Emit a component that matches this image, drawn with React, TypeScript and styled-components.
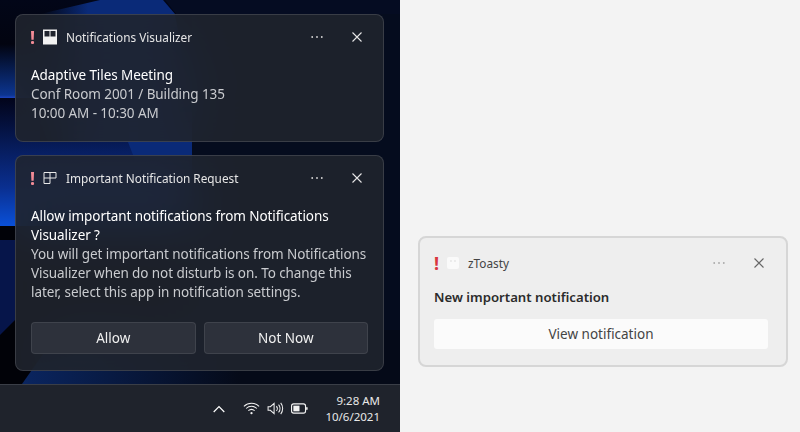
import React from 'react'
import styled, { createGlobalStyle } from 'styled-components'

const GlobalStyle = createGlobalStyle`
  html, body { margin: 0; padding: 0; background: #f3f3f3; }
  body { font-family: "Noto Sans", "Open Sans", Arial, sans-serif; }
`

const Page = styled.div`
  display: grid;
  grid-template-columns: 400px 400px;
  width: 800px;
  height: 432px;
  overflow: hidden;
`

const Desktop = styled.div`
  position: relative;
  display: flex;
  flex-direction: column;
  height: 432px;
  background: #050b1c;
  overflow: hidden;
`

const Wallpaper = styled.svg`
  position: absolute;
  top: 0;
  left: 0;
`

const Stack = styled.div`
  position: relative;
  flex: 1;
  display: flex;
  flex-direction: column;
  gap: 13px;
  padding: 14px 16px 0 15px;
`

const Card = styled.div<{ $height: number }>`
  height: ${p => p.$height}px;
  box-sizing: border-box;
  padding: 0 15px;
  border: 1px solid rgba(255, 255, 255, 0.13);
  border-radius: 8px;
  background: rgba(32, 36, 46, 0.88);
  backdrop-filter: blur(24px);
  color: #fff;
`

const Header = styled.div<{ $indent?: number }>`
  display: flex;
  align-items: center;
  height: 44px;
  padding-left: ${p => p.$indent ?? 0}px;
`

const Alert = styled.span<{ $color: string }>`
  width: 3px;
  margin-right: 9px;
  font-size: 18px;
  font-weight: 700;
  line-height: 16px;
  color: ${p => p.$color};
  display: flex;
  justify-content: center;
`

const AppName = styled.span<{ $color: string }>`
  margin-left: 9px;
  flex: 1;
  font-size: 11.8px;
  color: ${p => p.$color};
`

const HeaderButtons = styled.div<{ $inset: number }>`
  display: flex;
  align-items: center;
  gap: 29px;
  margin-right: ${p => p.$inset}px;
`

const Body = styled.div`
  margin-top: 7px;
  font-size: 13.5px;
  letter-spacing: -0.08px;
  line-height: 19px;
  color: #c9cbcf;
`

const Title = styled.div`
  color: #fff;
`

const Actions = styled.div`
  display: grid;
  grid-template-columns: 1fr 1fr;
  gap: 8px;
  margin-top: 20px;
`

const Action = styled.div`
  height: 32px;
  display: flex;
  align-items: center;
  justify-content: center;
  box-sizing: border-box;
  border: 1px solid rgba(255, 255, 255, 0.09);
  border-radius: 4px;
  background: #2d313b;
  font-size: 13.5px;
  color: #f0f0f0;
`

const Taskbar = styled.div`
  position: relative;
  height: 48px;
  box-sizing: border-box;
  border-top: 1px solid #3a3e47;
  background: #1f232c;
  display: flex;
  align-items: center;
  justify-content: flex-end;
  padding-right: 20px;
  color: #fff;
`

const Tray = styled.div`
  display: flex;
  align-items: center;
  margin-right: 17px;
  gap: 7px;
`

const Chevron = styled.svg`
  margin-right: 11px;
`

const Clock = styled.div`
  text-align: right;
  font-size: 11.5px;
  line-height: 16px;
  color: #e8e8e8;
`

const Light = styled.div`
  display: flex;
  align-items: flex-start;
  padding-left: 18px;
`

const LightCard = styled.div`
  width: 370px;
  height: 131px;
  margin-top: 236px;
  box-sizing: border-box;
  padding: 3px 18px 0 14px;
  border: 2px solid #d6d6d6;
  border-radius: 8px;
  background: #eeeeee;
`

const LightTitle = styled.div`
  margin-top: 3px;
  font-size: 13.2px;
  font-weight: 600;
  color: #2b2b2b;
`

const LightAction = styled.div`
  height: 30px;
  margin-top: 13px;
  display: flex;
  align-items: center;
  justify-content: center;
  border-radius: 3px;
  background: #fbfbfb;
  font-size: 13.5px;
  color: #444;
`

const Dots = ({ color }: { color: string }) => (
  <svg width="12" height="4" viewBox="0 0 12 4" fill={color}>
    <circle cx="1.2" cy="2" r="0.9" />
    <circle cx="6" cy="2" r="0.9" />
    <circle cx="10.8" cy="2" r="0.9" />
  </svg>
)

const Close = ({ color }: { color: string }) => (
  <svg width="10" height="10" viewBox="0 0 10 10" stroke={color} strokeWidth="1.1" fill="none">
    <path d="M0.5 0.5 L9.5 9.5 M9.5 0.5 L0.5 9.5" />
  </svg>
)

function App() {
  return (
    <>
      <GlobalStyle />
      <Page>
        <Desktop>
          <Wallpaper width="400" height="384" viewBox="0 0 400 384">
            <defs>
              <linearGradient id="upper" x1="0" y1="0" x2="0" y2="1">
                <stop offset="0" stopColor="#020618" />
                <stop offset="0.45" stopColor="#020410" />
                <stop offset="0.97" stopColor="#0c3590" />
                <stop offset="1" stopColor="#1d44c0" />
              </linearGradient>
              <linearGradient id="lower" x1="0" y1="0" x2="0" y2="1">
                <stop offset="0" stopColor="#02041a" />
                <stop offset="0.7" stopColor="#0a2f90" />
                <stop offset="1" stopColor="#0a50d8" />
              </linearGradient>
              <linearGradient id="sweep" x1="0" y1="0" x2="1" y2="0">
                <stop offset="0" stopColor="#030612" />
                <stop offset="0.3" stopColor="#0a2a78" />
                <stop offset="1" stopColor="#0a2a78" />
              </linearGradient>
              <linearGradient id="foot" x1="0" y1="0" x2="1" y2="0">
                <stop offset="0" stopColor="#0a2560" />
                <stop offset="1" stopColor="#050a18" />
              </linearGradient>
            </defs>
            <rect x="0" y="0" width="400" height="98" fill="url(#upper)" />
            <rect x="0" y="98" width="400" height="128" fill="url(#lower)" />
            <rect x="0" y="226" width="400" height="158" fill="#010208" />
            <polygon points="0,240 15,240 15,320 0,335" fill="#06154a" />
            <polygon points="22,384 60,330 240,330 240,384" fill="url(#foot)" />
            <rect x="240" y="330" width="160" height="54" fill="#050a18" />
            <polygon points="100,0 163,0 175,14 200,155 192,160 135,160 128,142 40,142 40,14" fill="url(#sweep)" />
            <rect x="192" y="0" width="208" height="330" fill="#050c1e" />
            <polygon points="165,0 400,0 400,14 176,14" fill="#050c22" />
          </Wallpaper>
          <Stack>
            <Card $height={128}>
              <Header>
                <Alert $color="#f28b96">!</Alert>
                <svg width="14" height="16" viewBox="0 0 14 16">
                  <rect x="0" y="0.5" width="14" height="15" fill="#f2f2f2" />
                  <path d="M1.5 2 H6.5 V7.5 H1.5 Z M7.5 2 H12.5 V7.5 H7.5 Z" fill="#20242e" />
                </svg>
                <AppName $color="#e6e6e6">Notifications Visualizer</AppName>
                <HeaderButtons $inset={6}>
                  <Dots color="#d8d8d8" />
                  <Close color="#e6e6e6" />
                </HeaderButtons>
              </Header>
              <Body>
                <Title>Adaptive Tiles Meeting</Title>
                Conf Room 2001 / Building 135
                <br />
                10:00 AM - 10:30 AM
              </Body>
            </Card>
            <Card $height={216}>
              <Header>
                <Alert $color="#f28b96">!</Alert>
                <svg width="14" height="14" viewBox="0 0 14 14" fill="none" stroke="#e8e8e8" strokeWidth="1">
                  <path d="M1 1.5 H7 V12.5 H1 Z M1 7 H7 M7 1.5 H13 V7 H7" />
                </svg>
                <AppName $color="#e6e6e6">Important Notification Request</AppName>
                <HeaderButtons $inset={6}>
                  <Dots color="#d8d8d8" />
                  <Close color="#e6e6e6" />
                </HeaderButtons>
              </Header>
              <Body>
                <Title>Allow important notifications from Notifications Visualizer ?</Title>
                You will get important notifications from Notifications Visualizer when do not disturb is on. To change this later, select this app in notification settings.
              </Body>
              <Actions>
                <Action>Allow</Action>
                <Action>Not Now</Action>
              </Actions>
            </Card>
          </Stack>
          <Taskbar>
            <Tray>
              <Chevron width="12" height="8" viewBox="0 0 12 8" fill="none" stroke="#fff" strokeWidth="1.2">
                <path d="M0.7 7 L6 1.5 L11.3 7" />
              </Chevron>
              <svg width="17" height="13" viewBox="0 0 18 14" fill="none" stroke="#f2f2f2" strokeWidth="1.1">
                <path d="M0.8 4.6 C5.5 0.2 12.5 0.2 17.2 4.6 M3.2 7 C6.6 3.8 11.4 3.8 14.8 7 M5.6 9.4 C7.8 7.5 10.2 7.5 12.4 9.4" />
                <circle cx="9" cy="12" r="1.2" fill="#f2f2f2" stroke="none" />
              </svg>
              <svg width="17" height="13" viewBox="0 0 18 14" fill="none" stroke="#f2f2f2" strokeWidth="1.1">
                <path d="M1 5 H3.5 L7.5 1.5 V12.5 L3.5 9 H1 Z M10 4.5 C11.2 6 11.2 8 10 9.5 M12.3 2.8 C14.3 5.3 14.3 8.7 12.3 11.2 M14.6 1 C17.4 4.5 17.4 9.5 14.6 13" />
              </svg>
              <svg width="17" height="11" viewBox="0 0 18 11" fill="none">
                <rect x="0.6" y="0.6" width="14.8" height="9.8" rx="2.2" stroke="#f2f2f2" strokeWidth="1.2" />
                <rect x="2.5" y="2.5" width="6.5" height="6" fill="#f2f2f2" />
                <rect x="16" y="3.8" width="1.6" height="3.4" rx="0.8" fill="#f2f2f2" />
              </svg>
            </Tray>
            <Clock>
              <div>9:28 AM</div>
              <div>10/6/2021</div>
            </Clock>
          </Taskbar>
        </Desktop>
        <Light>
          <LightCard>
            <Header $indent={1}>
              <Alert $color="#d9363e">!</Alert>
              <svg width="12" height="12" viewBox="0 0 12 12">
                <rect width="12" height="12" rx="2" fill="#fafafa" />
                <path d="M4 3 V5 M8 3 V5" stroke="#ddd" />
              </svg>
              <AppName $color="#444">zToasty</AppName>
              <HeaderButtons $inset={4}>
                <Dots color="#a8a8a8" />
                <Close color="#666" />
              </HeaderButtons>
            </Header>
            <LightTitle>New important notification</LightTitle>
            <LightAction>View notification</LightAction>
          </LightCard>
        </Light>
      </Page>
    </>
  )
}

export default App
